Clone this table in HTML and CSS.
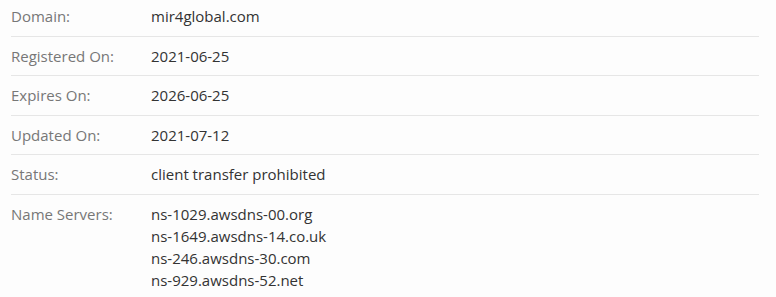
FILE: index.html
```html
<!DOCTYPE html>
<html lang="en">
<head>
    <meta charset="UTF-8">
    <meta name="viewport" content="width=device-width, initial-scale=1.0">
    <title>Whois</title>
    <link rel="stylesheet" href="styles.css">
</head>
<body>
    <div class="whois">
        <div class="row">
            <div class="label">Domain:</div>
            <div class="value">mir4global.com</div>
        </div>
        <div class="row">
            <div class="label">Registered On:</div>
            <div class="value">2021-06-25</div>
        </div>
        <div class="row">
            <div class="label">Expires On:</div>
            <div class="value">2026-06-25</div>
        </div>
        <div class="row">
            <div class="label">Updated On:</div>
            <div class="value">2021-07-12</div>
        </div>
        <div class="row">
            <div class="label">Status:</div>
            <div class="value">client transfer prohibited</div>
        </div>
        <div class="row">
            <div class="label">Name Servers:</div>
            <div class="value">
                ns-1029.awsdns-00.org<br>
                ns-1649.awsdns-14.co.uk<br>
                ns-246.awsdns-30.com<br>
                ns-929.awsdns-52.net
            </div>
        </div>
    </div>
</body>
</html>
```

FILE: styles.css
```css
* {
    margin: 0;
    padding: 0;
    box-sizing: border-box;
}
body {
    background-color: #fdfdfd;
    font-family: "Open Sans", sans-serif;
    font-size: 15px;
    line-height: 22px;
    color: #333;
}
.whois {
    margin: -3px 17px 0 11px;
}
.row {
    display: flex;
    padding: 8px 0 8.5px;
    border-bottom: 1px solid #e6e6e6;
}
.label {
    width: 140px;
    flex-shrink: 0;
    color: #777;
}
.value {
    color: #333;
}
```
